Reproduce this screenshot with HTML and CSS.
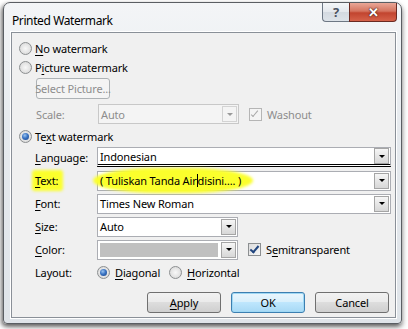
FILE: index.html
```html
<!DOCTYPE html>
<html>
<head>
    <title>Printed Watermark</title>
    <meta charset="utf-8" />
    <link rel="stylesheet" href="styles.css">
</head>
<body>
    <div class="window">
        <div class="titlebar">
            <span class="title">Printed Watermark</span>
            <div class="caption-buttons">
                <span class="cap-btn help">?</span>
                <span class="cap-btn close">&#x2715;</span>
            </div>
        </div>
        <div class="client">
            <div class="option"><span class="radio"></span><span><u>N</u>o watermark</span></div>
            <div class="option"><span class="radio"></span><span>P<u>i</u>cture watermark</span></div>
            <div class="picture-group">
                <div class="btn btn-disabled select-picture">Select Picture...</div>
                <div class="row">
                    <span class="label disabled">Scale:</span>
                    <div class="combo combo-short combo-disabled"><span class="value">Auto</span><span class="drop"></span></div>
                    <span class="check check-disabled"></span><span class="disabled">Washout</span>
                </div>
            </div>
            <div class="option option-text"><span class="radio checked"></span><span>Te<u>x</u>t watermark</span></div>
            <div class="text-group">
                <div class="row">
                    <span class="label"><u>L</u>anguage:</span>
                    <div class="combo combo-long combo-lang"><span class="value">Indonesian</span><span class="drop"></span></div>
                </div>
                <div class="row">
                    <span class="label"><span class="marker marker-label"><u>T</u>ext:</span></span>
                    <div class="combo combo-long"><span class="value"><span class="marker marker-field">( Tuliskan Tanda Air<span class="caret"></span>disini…. )</span></span><span class="drop"></span></div>
                </div>
                <div class="row">
                    <span class="label"><u>F</u>ont:</span>
                    <div class="combo combo-long"><span class="value">Times New Roman</span><span class="drop"></span></div>
                </div>
                <div class="row">
                    <span class="label"><u>S</u>ize:</span>
                    <div class="combo combo-short"><span class="value">Auto</span><span class="drop"></span></div>
                </div>
                <div class="row">
                    <span class="label"><u>C</u>olor:</span>
                    <div class="combo combo-short"><span class="swatch"></span><span class="drop"></span></div>
                    <span class="check checked"></span><span>S<u>e</u>mitransparent</span>
                </div>
                <div class="row">
                    <span class="label">Layout:</span>
                    <span class="radio checked"></span><span class="layout-option"><u>D</u>iagonal</span>
                    <span class="radio"></span><span><u>H</u>orizontal</span>
                </div>
            </div>
            <div class="buttons">
                <div class="btn"><u>A</u>pply</div>
                <div class="btn btn-default">OK</div>
                <div class="btn">Cancel</div>
            </div>
        </div>
    </div>
</body>
</html>
```

FILE: styles.css
```css
body {
    margin: 0;
    padding: 2px 0 0 3px;
    width: 408px;
    height: 329px;
    box-sizing: border-box;
    background-color: #ffffff;
    font-family: 'Noto Sans', 'Open Sans', sans-serif;
    font-size: 11px;
    letter-spacing: -0.15px;
    color: #000;
    overflow: hidden;
}
u {
    text-decoration: underline;
    text-underline-offset: 2px;
}
.window {
    width: 399px;
    height: 322px;
    box-sizing: border-box;
    border: 1px solid #5a5e63;
    border-radius: 7px 7px 4px 4px;
    background: linear-gradient(180deg, #f3f5f7 0%, #e6eaee 40%, #dfe4e9 100%);
    box-shadow: -2px 2px 4px rgba(0, 0, 0, 0.45), 1px 3px 5px rgba(0, 0, 0, 0.35);
    display: flex;
    flex-direction: column;
}
.titlebar {
    height: 29px;
    display: flex;
    align-items: flex-start;
    justify-content: space-between;
}
.title {
    margin: 9px 0 0 8px;
    font-size: 12px;
    letter-spacing: -0.4px;
}
.caption-buttons {
    display: flex;
    margin-right: 4px;
}
.cap-btn {
    height: 18px;
    display: flex;
    align-items: center;
    justify-content: center;
    border: 1px solid #6d7784;
    border-top: none;
    box-sizing: content-box;
}
.help {
    width: 26px;
    border-radius: 0 0 0 4px;
    border-right: none;
    background: linear-gradient(180deg, #f4f6f8 0%, #e3e7ec 50%, #d3d9e0 51%, #dde3e9 100%);
    color: #4a5260;
    font-size: 13px;
    font-weight: bold;
}
.close {
    width: 46px;
    border-radius: 0 0 4px 0;
    border-color: #6a2a22;
    background: linear-gradient(180deg, #e9a797 0%, #d57560 45%, #c2452f 55%, #d5624a 100%);
    color: #fff;
    font-size: 13px;
    font-weight: bold;
    text-shadow: 0 0 2px #3a1a14, 0 0 1px #3a1a14;
}
.client {
    margin: 0 5px 5px 7px;
    flex: 1;
    border: 1px solid #8a9098;
    box-shadow: 0 0 0 1px #ffffff;
    background-color: #f0f0f0;
    padding: 6px 6px 0 7px;
    display: flex;
    flex-direction: column;
}
.option {
    height: 19px;
    display: flex;
    align-items: center;
}
.option .radio {
    margin-right: 3px;
}
.option-text {
    margin-top: 2px;
}
.radio {
    width: 11px;
    height: 11px;
    border: 1px solid #8c8f91;
    border-radius: 50%;
    background: radial-gradient(circle at 50% 50%, #f8f8f8 0%, #e4e4e4 55%, #cfcfcf 100%);
    flex-shrink: 0;
    position: relative;
}
.radio.checked::after {
    content: '';
    position: absolute;
    left: 2px;
    top: 2px;
    width: 7px;
    height: 7px;
    border-radius: 50%;
    background: radial-gradient(circle at 40% 35%, #9bc4f0 0%, #3a74c4 45%, #173f83 100%);
}
.picture-group {
    padding-left: 17px;
    display: flex;
    flex-direction: column;
}
.select-picture {
    margin-top: 1px;
    width: 91px;
    white-space: nowrap;
}
.picture-group .row {
    margin-top: 4px;
    height: 22px;
}
.text-group {
    padding-left: 16px;
    display: flex;
    flex-direction: column;
}
.row {
    height: 23px;
    display: flex;
    align-items: center;
}
.label {
    width: 62px;
    flex-shrink: 0;
}
.disabled {
    color: #8d8d8d;
}
.combo {
    height: 18px;
    border: 1px solid #abadb3;
    background-color: #fff;
    display: flex;
    align-items: center;
    justify-content: space-between;
    padding-left: 2px;
    flex-shrink: 0;
}
.combo-short {
    width: 137px;
}
.combo-long {
    width: 290px;
}
.combo-disabled {
    background-color: #f4f4f4;
    border-color: #c8c8c8;
}
.combo-disabled .value {
    color: #8d8d8d;
}
.combo-lang {
    height: 16px;
    border-bottom: 3px double #000;
    margin-bottom: 1px;
}
.value {
    white-space: nowrap;
}
.drop {
    width: 15px;
    height: 16px;
    margin-right: 1px;
    border: 1px solid #a5a5a5;
    box-sizing: border-box;
    background: linear-gradient(180deg, #f6f6f6 0%, #e6e6e6 50%, #d7d7d7 100%);
    display: flex;
    align-items: center;
    justify-content: center;
}
.drop::after {
    content: '';
    border-left: 3px solid transparent;
    border-right: 3px solid transparent;
    border-top: 3px solid #000;
}
.combo-disabled .drop {
    border-color: #d3d3d3;
    background: #f4f4f4;
}
.combo-disabled .drop::after {
    border-top-color: #9a9a9a;
}
.swatch {
    width: 118px;
    height: 14px;
    background-color: #c0c0c0;
}
.check {
    width: 11px;
    height: 11px;
    margin: 0 5px 0 10px;
    border: 1px solid #8c8f91;
    background: linear-gradient(135deg, #dcdcdc 0%, #f6f6f6 100%);
    position: relative;
    flex-shrink: 0;
}
.check::after {
    content: '';
    position: absolute;
    left: 3px;
    top: 0px;
    width: 3px;
    height: 7px;
    border-right: 2px solid #21457e;
    border-bottom: 2px solid #21457e;
    transform: rotate(40deg);
}
.check-disabled {
    border-color: #b5b5b5;
    background: #f4f4f4;
}
.check-disabled::after {
    border-color: #a8a8a8;
    width: 2px;
    border-width: 0 1px 1px 0;
}
.layout-option {
    margin-right: 9px;
}
.row .radio {
    margin-right: 5px;
}
.marker {
    position: relative;
    z-index: 0;
}
.marker::before {
    content: '';
    position: absolute;
    z-index: -1;
    background-color: #fbff2c;
    filter: blur(1.5px);
}
.marker-label::before {
    left: -3px;
    right: -5px;
    top: -3px;
    bottom: -3px;
    border-radius: 3px;
}
.marker-field::before {
    left: -7px;
    right: -12px;
    top: -5px;
    bottom: -5px;
    border-radius: 40% / 50%;
}
.caret {
    display: inline-block;
    width: 1px;
    height: 13px;
    background: #000;
    vertical-align: -2px;
}
.buttons {
    margin-top: 8px;
    display: flex;
    justify-content: flex-end;
    gap: 10px;
}
.btn {
    width: 72px;
    height: 19px;
    border: 1px solid #707070;
    border-radius: 3px;
    background: linear-gradient(180deg, #f2f2f2 0%, #ebebeb 45%, #dddddd 50%, #cfcfcf 100%);
    display: flex;
    align-items: center;
    justify-content: center;
}
.btn-default {
    border-color: #3c7fb1;
    background: linear-gradient(180deg, #eaf6fd 0%, #d9f0fc 45%, #bee6fd 50%, #a7d9f5 100%);
    box-shadow: inset 0 0 0 1px #9fd8f4;
}
.btn-disabled {
    border-color: #adb2b5;
    background: #f4f4f4;
    color: #8d8d8d;
}
```
